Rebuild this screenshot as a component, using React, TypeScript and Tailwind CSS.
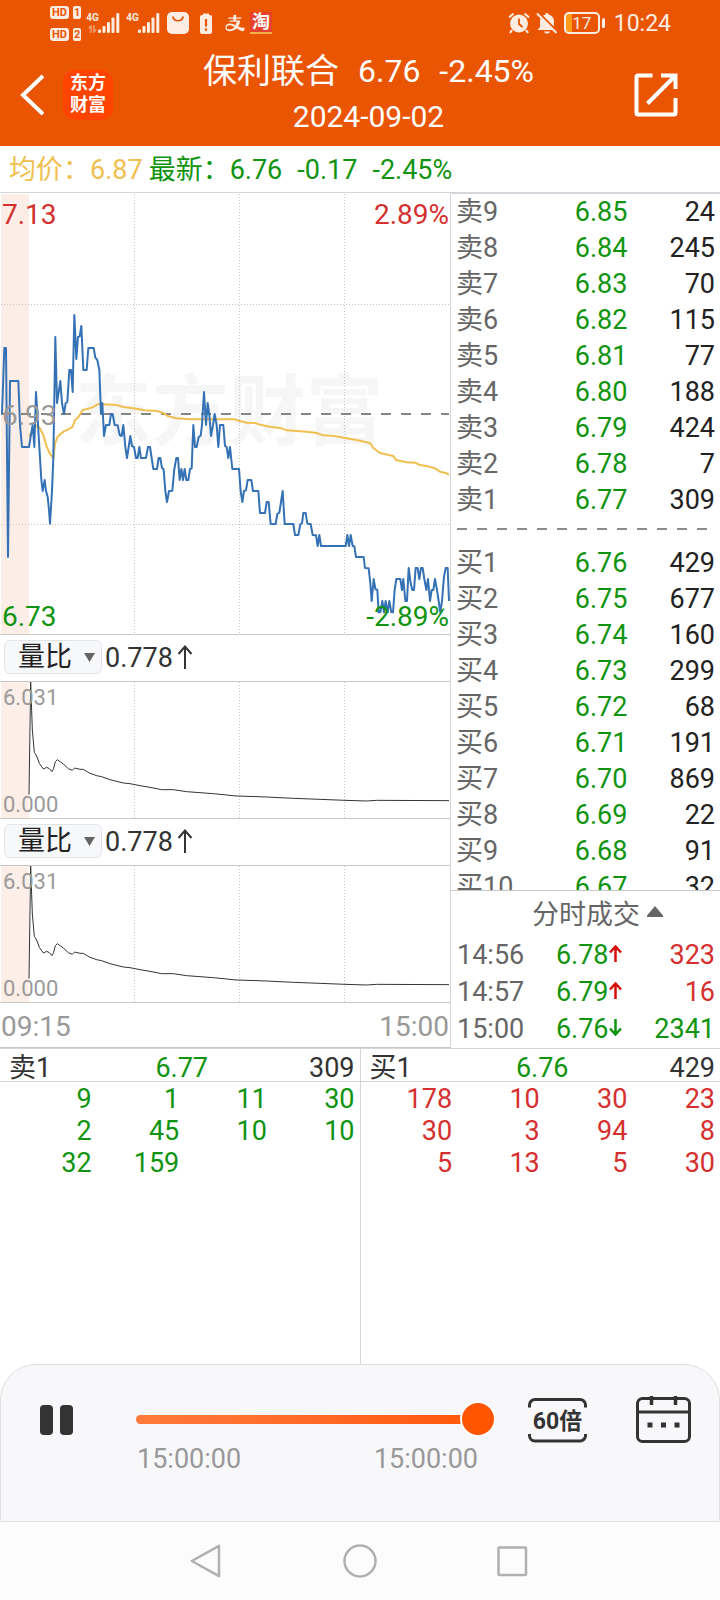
import React from "react";
import { AiOutlineAlipay } from "react-icons/ai";

const pricePoints =
  "6,672 13,474 18,474 24,1101 30,573 55,573 60,705 66,771 87,771 92,740 98,705 103,771 108,606 114,705 120,804 124,870 128,903 134,870 138,903 143,920 147,960 150,1001 156,903 160,804 166,441 171,639 176,606 181,573 186,639 192,672 197,639 202,636 208,540 213,540 218,606 223,375 229,507 234,441 239,439 244,408 250,540 260,540 265,474 281,474 286,503 292,510 298,540 303,672 307,639 312,738 318,705 328,705 333,672 338,672 344,705 353,706 359,735 365,738 370,705 376,771 381,804 386,771 391,738 396,768 402,771 408,804 413,804 418,771 423,804 438,804 444,771 450,771 455,804 460,837 471,837 476,804 481,804 486,834 491,838 496,903 501,936 507,903 517,902 523,837 529,804 534,804 539,870 544,837 549,870 554,837 559,870 565,870 570,837 575,835 580,705 585,771 590,771 596,741 602,737 606,705 612,606 618,705 623,639 628,675 633,738 639,705 644,672 650,705 655,771 660,705 670,705 675,768 680,771 685,804 690,771 697,837 717,837 722,903 727,936 732,903 738,901 743,870 754,870 759,903 775,903 780,969 795,969 800,936 806,936 812,1002 827,1002 832,972 838,968 843,936 848,903 854,1002 880,1002 885,1035 895,1035 901,1003 906,1000 910,969 917,969 922,1001 932,1002 938,1035 948,1036 953,1068 958,1035 963,1068 1037,1068 1042,1035 1047,1068 1052,1035 1058,1068 1063,1069 1068,1101 1091,1101 1095,1134 1106,1135 1111,1180 1115,1233 1121,1167 1126,1197 1132,1200 1136,1267 1141,1267 1147,1233 1152,1267 1157,1233 1163,1267 1168,1233 1174,1267 1179,1267 1184,1200 1189,1167 1201,1167 1206,1200 1210,1167 1216,1233 1221,1233 1226,1134 1232,1180 1237,1200 1242,1200 1247,1134 1253,1134 1258,1167 1263,1134 1268,1134 1273,1167 1279,1200 1284,1167 1290,1233 1295,1200 1300,1200 1305,1167 1311,1200 1316,1233 1321,1267 1326,1233 1332,1160 1337,1134 1343,1134 1347,1233";

const averagePoints =
  "87,740 98,720 112,706 118,712 130,735 140,770 150,792 160,804 165,760 172,742 180,733 192,724 205,718 218,710 225,690 236,680 248,660 265,656 280,651 292,643 310,643 350,645 370,651 400,655 435,661 470,663 490,669 505,679 530,685 570,688 705,688 720,693 740,698 765,699 780,704 810,710 845,715 860,721 920,725 950,729 970,736 1005,738 1030,743 1070,750 1110,759 1120,774 1140,789 1180,798 1188,810 1220,817 1245,818 1260,825 1280,828 1305,835 1320,845 1340,850 1347,855";

const ratioPoints =
  "87,494 92,156 97,300 103,367 110,378 118,400 130,417 140,412 148,416 156,425 161,415 166,395 172,389 180,395 190,402 205,416 217,421 224,414 240,418 250,418 270,430 290,437 305,440 330,449 370,459 390,461 420,467 450,472 485,479 520,479 560,485 640,491 710,498 800,501 880,505 960,508 1035,511 1100,513 1130,511 1347,512";

type Level = [string, string, string];

const sells: Level[] = [
  ["卖9", "6.85", "24"],
  ["卖8", "6.84", "245"],
  ["卖7", "6.83", "70"],
  ["卖6", "6.82", "115"],
  ["卖5", "6.81", "77"],
  ["卖4", "6.80", "188"],
  ["卖3", "6.79", "424"],
  ["卖2", "6.78", "7"],
  ["卖1", "6.77", "309"],
];

const buys: Level[] = [
  ["买1", "6.76", "429"],
  ["买2", "6.75", "677"],
  ["买3", "6.74", "160"],
  ["买4", "6.73", "299"],
  ["买5", "6.72", "68"],
  ["买6", "6.71", "191"],
  ["买7", "6.70", "869"],
  ["买8", "6.69", "22"],
  ["买9", "6.68", "91"],
  ["买10", "6.67", "32"],
];

const trades = [
  { time: "14:56", price: "6.78", up: true, volume: "323" },
  { time: "14:57", price: "6.79", up: true, volume: "16" },
  { time: "15:00", price: "6.76", up: false, volume: "2341" },
];

function HdBadge({ slot }: { slot: string }) {
  return (
    <div className="flex items-center gap-1 text-[11px] leading-[13px] font-bold text-[#ea5504]">
      <span className="rounded-[3px] bg-[#fdece2] px-0.5">HD</span>
      <span className="rounded-[2px] bg-[#fdece2] px-px">{slot}</span>
    </div>
  );
}

function Signal({ data }: { data?: boolean }) {
  return (
    <div className="flex items-end">
      <div className="flex h-5 w-[11px] flex-col items-center">
        <span className="text-[10px] leading-[10px] font-bold">4G</span>
        {data && (
          <svg viewBox="0 0 9 8" className="mt-0.5 h-2 w-[9px] opacity-50" fill="none" stroke="currentColor" strokeWidth="1.5">
            <path d="M3 8V1L0.8 3.4M6 0v7l2.2-2.4" />
          </svg>
        )}
      </div>
      <svg viewBox="0 0 22 20" className="h-5 w-[22px]" fill="currentColor">
        <rect x="0" y="16.5" width="3" height="3.5" rx="1" />
        <rect x="4.5" y="13" width="3" height="7" rx="1" />
        <rect x="9" y="9" width="3" height="11" rx="1" />
        <rect x="13.5" y="4.5" width="3" height="15.5" rx="1" />
        <rect x="18.3" y="0" width="3" height="20" rx="1" />
      </svg>
    </div>
  );
}

function StatusBar() {
  return (
    <div className="flex h-[46px] items-center justify-between pr-[49px] pl-[50px] text-[#fdece2]">
      <div className="flex items-center">
        <div className="flex w-[37px] flex-col gap-[9px]">
          <HdBadge slot="1" />
          <HdBadge slot="2" />
        </div>
        <div className="flex items-center gap-[7px]">
          <Signal data />
          <Signal />
          <svg viewBox="0 0 22 22" className="size-[22px]">
            <rect width="22" height="22" rx="5" fill="currentColor" />
            <path d="M6 5c1 5 9 5 10 0" fill="none" stroke="#ea5504" strokeWidth="1.6" strokeLinecap="round" />
          </svg>
        </div>
        <svg viewBox="0 0 12 21" className="ml-[11px] h-[21px] w-3">
          <path d="M3 0.5h6V2.500H3z" fill="currentColor" />
          <rect y="2" width="12" height="19" rx="2" fill="currentColor" />
          <path d="M6 6v7.500M6 15.500v2.200" stroke="#ea5504" strokeWidth="2.200" />
        </svg>
        <AiOutlineAlipay className="ml-3 size-[22px]" />
        <span className="ml-1 flex size-[22px] items-center justify-center border-b-2 border-[#f3b04a] bg-[#e5432b] text-[18px] leading-5 font-bold text-white">
          淘
        </span>
      </div>
      <div className="flex items-center">
        <svg viewBox="0 0 22 22" className="size-[22px]" fill="none" stroke="currentColor">
          <circle cx="11" cy="11.500" r="9" fill="currentColor" stroke="none" />
          <path d="M1 5.500 5.500 1.500M21 5.500 16.500 1.500" strokeWidth="2" />
          <path d="M4 18l-2 3M18 18l2 3" strokeWidth="2.200" />
          <path d="M11 6.500v5.500l3.500 3" stroke="#ea5504" strokeWidth="1.800" />
        </svg>
        <svg viewBox="0 0 22 22" className="ml-1.5 size-[22px]">
          <path d="M11 1c1 0 1.600.7 1.600 1.500C16 3.300 18 6 18 9.500V15l2.500 3h-19L4 15V9.500C4 6 6 3.300 9.400 2.500 9.400 1.700 10 1 11 1z" fill="currentColor" />
          <path d="M8 19.500h6c-.5 1.500-1.500 2-3 2s-2.500-.5-3-2z" fill="currentColor" />
          <path d="M2.500.5 22 20" stroke="#ea5504" strokeWidth="2" />
          <path d="M1 1.500 20.500 21" stroke="currentColor" strokeWidth="2" />
        </svg>
        <div className="ml-[6px] flex items-center">
          <span className="flex h-[22px] w-9 items-center justify-center rounded-[5px] border-2 border-current bg-linear-to-r from-[#ff9b1a] from-20% to-transparent to-20% text-[17px] leading-[18px]">
            17
          </span>
          <span className="ml-0.5 h-2.5 w-[3px] rounded-sm bg-current" />
        </div>
        <span className="ml-[9px] pt-0.5 text-[23px] leading-[26px]">10:24</span>
      </div>
    </div>
  );
}

function Header() {
  return (
    <header className="bg-[#ea5504] text-white">
      <StatusBar />
      <div className="flex h-[100px] items-center pr-[42px] pb-0.5 pl-5">
        <button type="button" aria-label="返回" className="shrink-0">
          <svg viewBox="0 0 24 42" className="h-[42px] w-6" fill="none" stroke="currentColor" strokeWidth="4">
            <path d="M23 2 3 21l20 19" />
          </svg>
        </button>
        <span className="ml-[19px] flex size-[50px] shrink-0 flex-col items-center justify-center rounded-xl bg-[#ff4400] pb-0.5 text-[18px] leading-[22px] font-bold">
          <span>东方</span>
          <span>财富</span>
        </span>
        <div className="flex flex-1 flex-col items-center pb-0.5">
          <h1 className="flex items-center gap-[19px] text-[32px] leading-[45px] whitespace-nowrap">
            <span className="text-[34px]">保利联合</span>
            <span>6.76</span>
            <span>-2.45%</span>
          </h1>
          <p className="text-[30px] leading-[45px]">2024-09-02</p>
        </div>
        <button type="button" aria-label="分享" className="ml-2.5 shrink-0">
          <svg viewBox="0 0 44 44" className="size-11" fill="none" stroke="currentColor" strokeWidth="4">
            <path d="M18.500 2.500H4a1.500 1.500 0 0 0-1.500 1.500v36A1.500 1.500 0 0 0 4 41.500h36a1.500 1.500 0 0 0 1.500-1.500V25" />
            <path d="M27 2.500h14.500V16" />
            <path d="M13.500 30.500 41 3" />
          </svg>
        </button>
      </div>
    </header>
  );
}

function VerticalGrid({ top, bottom }: { top: number; bottom: number }) {
  return (
    <g stroke="#c4c4c4" strokeWidth="3" strokeDasharray="3 6">
      <path d={`M403.5 ${top}V${bottom}M718.5 ${top}V${bottom}M1033.5 ${top}V${bottom}`} />
    </g>
  );
}

function PriceChart() {
  return (
    <div className="relative border-b border-[#c8c8c8] text-[28px] leading-8">
      <div className="absolute inset-0 flex items-center justify-center pl-2 text-[77px] leading-none font-bold text-[#f6f6f6]">
        东方财富
      </div>
      <svg viewBox="0 9 1350 1323" preserveAspectRatio="none" className="relative block h-[441px] w-full" fill="none">
        <rect x="3" y="12" width="84" height="1320" fill="#fbd5c6" fillOpacity="0.42" />
        <VerticalGrid top={12} bottom={1332} />
        <path d="M3 343.500H1347M3 1003.500H1347" stroke="#c4c4c4" strokeWidth="3" strokeDasharray="3 6" />
        <path d="M3 672H1347" stroke="#858585" strokeWidth="6" strokeDasharray="30 30" />
        <polyline points={averagePoints} stroke="#f0bf50" strokeWidth="6" strokeLinejoin="round" />
        <polyline points={pricePoints} stroke="#3572b5" strokeWidth="6" strokeLinejoin="round" />
      </svg>
      <span className="absolute top-1.5 left-0.5 text-[#d4302f]">7.13</span>
      <span className="absolute top-1.5 right-px text-[#d4302f]">2.89%</span>
      <span className="absolute inset-y-0 left-0.5 flex items-center pt-1 text-[#999]">6.93</span>
      <span className="absolute bottom-px left-0.5 text-[#109410]">6.73</span>
      <span className="absolute right-px bottom-px text-[#109410]">-2.89%</span>
    </div>
  );
}

function RatioPanel({ id }: { id: string }) {
  return (
    <section>
      <div className="flex h-[47px] items-center border-b border-[#c8c8c8] pb-0.5 pl-1 text-[#333]">
        <label htmlFor={id} className="sr-only">
          指标
        </label>
        <div className="relative">
          <select
            id={id}
            className="block h-[34px] w-[98px] appearance-none rounded-md border border-[#e2e4e8] bg-[#f7f8fa] pl-[13px] text-[27px] leading-8 text-[#222]"
          >
            <option>量比</option>
          </select>
          <svg viewBox="0 0 11 9" className="pointer-events-none absolute top-[13px] right-[7px] h-[9px] w-[11px]">
            <path d="M0 0h11L5.500 9z" fill="#666" />
          </svg>
        </div>
        <span className="ml-[3px] pt-0.5 text-[27px] leading-8">0.778</span>
        <svg viewBox="0 0 16 24" className="ml-1 h-6 w-4" fill="none" stroke="currentColor" strokeWidth="2">
          <path d="M8 24V2M1.500 9 8 1.500 14.500 9" />
        </svg>
      </div>
      <div className="relative border-b border-[#c8c8c8] text-[22px] leading-6 text-[#999]">
        <svg viewBox="0 156 1350 408" preserveAspectRatio="none" className="block h-[136px] w-full" fill="none">
          <rect x="3" y="156" width="84" height="408" fill="#fdeee8" />
          <VerticalGrid top={156} bottom={564} />
          <polyline points={ratioPoints} stroke="#333" strokeWidth="3" />
        </svg>
        <span className="absolute top-1 left-[3px]">6.031</span>
        <span className="absolute bottom-px left-[3px]">0.000</span>
      </div>
    </section>
  );
}

function LevelTable({ rows, label }: { rows: Level[]; label: string }) {
  return (
    <table aria-label={label} className="w-full table-fixed border-collapse">
      <tbody>
        {rows.map(([name, price, volume]) => (
          <tr key={name} className="h-9 leading-9">
            <th scope="row" className="w-[46%] p-0 pl-[5px] text-left font-normal text-[#666]">
              {name}
            </th>
            <td className="w-[27%] p-0 text-[#109410]">{price}</td>
            <td className="p-0 pr-[5px] text-right text-[#222]">{volume}</td>
          </tr>
        ))}
      </tbody>
    </table>
  );
}

function OrderBook() {
  return (
    <aside className="flex-1 border-l border-[#d3d5da] text-[27px]">
      <div className="h-[697px] overflow-hidden border-t border-[#d3d5da]">
        <LevelTable rows={sells} label="卖盘" />
        <div className="h-[27px] pt-2.5 pr-3 pl-1.5">
          <svg className="block h-0.5 w-full">
            <line x1="0" y1="1" x2="100%" y2="1" stroke="#8c8c8c" strokeWidth="2" strokeDasharray="10 10" />
          </svg>
        </div>
        <LevelTable rows={buys} label="买盘" />
      </div>
      <section className="border-t border-[#c8c8c8]">
        <button type="button" className="flex h-[46px] w-full items-center justify-center gap-[7px] pt-0.5 pl-6 leading-9 text-[#666]">
          分时成交
          <svg viewBox="0 0 16 11" className="mb-2 h-[11px] w-4">
            <path d="M8 0l8 9.500V11H0V9.500z" fill="#666" />
          </svg>
        </button>
        <table aria-label="分时成交" className="w-full table-fixed border-collapse">
          <tbody>
            {trades.map((t) => (
              <tr key={t.time} className="h-[37px] leading-[37px]">
                <td className="w-[39%] p-0 pl-1.5 text-[#666]">{t.time}</td>
                <td className="w-[30%] p-0 text-[#109410]">
                  <span className="flex items-center">
                    {t.price}
                    <svg
                      viewBox="0 0 13 17"
                      className={t.up ? "mb-1 h-[17px] w-[13px] text-[#d90b0b]" : "mb-1 h-[17px] w-[13px] rotate-180"}
                      fill="none"
                      stroke="currentColor"
                      strokeWidth="2.500"
                    >
                      <path d="M6.500 17V2M1 7.500l5.500-6 5.500 6" />
                    </svg>
                  </span>
                </td>
                <td className={t.up ? "p-0 pr-[5px] text-right text-[#d4302f]" : "p-0 pr-[5px] text-right text-[#109410]"}>
                  {t.volume}
                </td>
              </tr>
            ))}
          </tbody>
        </table>
      </section>
    </aside>
  );
}

function QueuePanel({
  name,
  price,
  volume,
  orders,
  tone,
}: {
  name: string;
  price: string;
  volume: string;
  orders: string[];
  tone: "sell" | "buy";
}) {
  return (
    <section className={tone === "sell" ? "flex-1 border-r border-[#d6d6d6] text-[#109410]" : "flex-1 text-[#d4302f]"}>
      <div className="grid h-[33px] grid-cols-3 items-center border-b border-[#d6d6d6] pt-[3px] pr-[5px] pl-[9px] leading-8">
        <span className="text-[#333]">{name}</span>
        <span className="text-center text-[#109410]">{price}</span>
        <span className="text-right text-[#333]">{volume}</span>
      </div>
      <ul className="grid grid-cols-4 pt-px pr-[5px] pl-1 text-right leading-8">
        {orders.map((o, i) => (
          <li key={i}>{o}</li>
        ))}
      </ul>
    </section>
  );
}

function Player() {
  return (
    <section className="h-[158px] rounded-t-[36px] border border-[#e0e0e0] bg-[#f8f8fa] pt-[31px] pr-7 pl-[39px] text-[#333]">
      <div className="flex items-start">
        <button type="button" aria-label="暂停" className="flex h-[47px] shrink-0 items-center gap-[7px]">
          <span className="h-[30px] w-[13px] rounded-[4px] bg-[#333]" />
          <span className="h-[30px] w-[13px] rounded-[4px] bg-[#333]" />
        </button>
        <div className="ml-[63px] flex-1">
          <input
            type="range"
            aria-label="回放进度"
            min="0"
            max="100"
            defaultValue="100"
            className="block h-[47px] w-full appearance-none bg-transparent [&::-webkit-slider-runnable-track]:h-[9px] [&::-webkit-slider-runnable-track]:rounded-full [&::-webkit-slider-runnable-track]:bg-linear-to-r [&::-webkit-slider-runnable-track]:from-[#ff7a3a] [&::-webkit-slider-runnable-track]:to-[#ff5500] [&::-webkit-slider-thumb]:-mt-[14px] [&::-webkit-slider-thumb]:size-9 [&::-webkit-slider-thumb]:appearance-none [&::-webkit-slider-thumb]:rounded-full [&::-webkit-slider-thumb]:border-2 [&::-webkit-slider-thumb]:border-white [&::-webkit-slider-thumb]:bg-[#ff5500]"
          />
          <div className="mt-0.5 flex justify-between pr-[18px] pl-px text-[27px] leading-7 text-[#999]">
            <span>15:00:00</span>
            <span>15:00:00</span>
          </div>
        </div>
        <button type="button" className="relative ml-8 flex h-[47px] w-[59px] shrink-0 items-center justify-center pt-1 text-[23px] leading-6 font-bold">
          <svg viewBox="0 0 59 47" className="absolute inset-0 size-full" fill="none" stroke="currentColor" strokeWidth="3">
            <path d="M1.500 11.500V9A5.500 5.500 0 0 1 7 3.500h45A5.500 5.500 0 0 1 57.500 9v2.500" />
            <path d="M1.500 38V39.500A5.500 5.500 0 0 0 7 45h45a5.500 5.500 0 0 0 5.500-5.500V38" />
          </svg>
          60倍
        </button>
        <button type="button" aria-label="日历" className="ml-[49px] shrink-0">
          <svg viewBox="0 0 55 47" className="h-[47px] w-[55px]" fill="none" stroke="currentColor" strokeWidth="3">
            <rect x="1.500" y="2.500" width="52" height="43" rx="5" />
            <path d="M2 16h51" />
            <path d="M15.500 0v9M39.500 0v9" strokeWidth="3.500" />
            <path d="M11.500 29h5M25 29h5M38.500 29h5" strokeWidth="5" />
          </svg>
        </button>
      </div>
    </section>
  );
}

function SystemNav() {
  return (
    <nav className="flex h-[78px] items-center justify-center gap-[119px] bg-[#fcfcfc] text-[#b0b0b0]">
      <button type="button" aria-label="后退">
        <svg viewBox="0 0 34 34" className="size-[34px]" fill="none" stroke="currentColor" strokeWidth="2.500" strokeLinejoin="round">
          <path d="M29 1.800v30.400L1.800 17z" />
        </svg>
      </button>
      <button type="button" aria-label="主页">
        <svg viewBox="0 0 34 34" className="size-[34px]" fill="none" stroke="currentColor" strokeWidth="2.500">
          <circle cx="17" cy="17" r="15.500" />
        </svg>
      </button>
      <button type="button" aria-label="最近任务">
        <svg viewBox="0 0 34 34" className="size-[34px]" fill="none" stroke="currentColor" strokeWidth="2.500">
          <rect x="2.500" y="3.500" width="27.500" height="27.500" rx="1" />
        </svg>
      </button>
    </nav>
  );
}

export default function App() {
  return (
    <div className="flex min-h-screen flex-col bg-white font-[Roboto,'Noto_Sans_CJK_SC',sans-serif]">
      <Header />
      <div className="flex h-[47px] items-center border-b border-[#d3d5da] pt-0.5 pl-[9px] text-[27px] leading-9 text-[#109410]">
        <span className="text-[#f0bf50]">均价：6.87</span>
        <span className="ml-1.5">最新：6.76</span>
        <span className="ml-[15px]">-0.17</span>
        <span className="ml-[15px]">-2.45%</span>
      </div>
      <div className="flex">
        <div className="w-[62.5%]">
          <PriceChart />
          <RatioPanel id="indicator-1" />
          <RatioPanel id="indicator-2" />
          <div className="flex h-[45px] items-center justify-between border-b border-[#c8c8c8] px-px pt-[3px] text-[28px] leading-8 text-[#999]">
            <span>09:15</span>
            <span>15:00</span>
          </div>
        </div>
        <OrderBook />
      </div>
      <main className="flex flex-1 border-t border-[#d6d6d6] text-[27px]">
        <QueuePanel
          name="卖1"
          price="6.77"
          volume="309"
          tone="sell"
          orders={["9", "1", "11", "30", "2", "45", "10", "10", "32", "159"]}
        />
        <QueuePanel
          name="买1"
          price="6.76"
          volume="429"
          tone="buy"
          orders={["178", "10", "30", "23", "30", "3", "94", "8", "5", "13", "5", "30"]}
        />
      </main>
      <Player />
      <SystemNav />
    </div>
  );
}
